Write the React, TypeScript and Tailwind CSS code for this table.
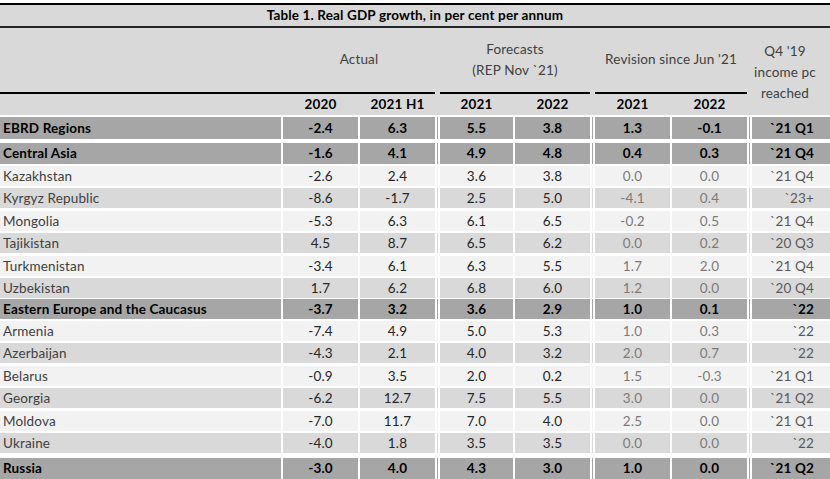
type Kind = 'region' | 'light' | 'dark';

interface Row {
  name: string;
  values: string[];
  kind: Kind;
  h: string;
  mt: string;
}

const rows: Row[] = [
  { name: 'EBRD Regions', values: ['-2.4', '6.3', '5.5', '3.8', '1.3', '-0.1', '`21 Q1'], kind: 'region', h: 'h-[22px]', mt: 'mt-[2px]' },
  { name: 'Central Asia', values: ['-1.6', '4.1', '4.9', '4.8', '0.4', '0.3', '`21 Q4'], kind: 'region', h: 'h-[21px]', mt: 'mt-[4px]' },
  { name: 'Kazakhstan', values: ['-2.6', '2.4', '3.6', '3.8', '0.0', '0.0', '`21 Q4'], kind: 'light', h: 'h-[20px]', mt: 'mt-[2px]' },
  { name: 'Kyrgyz Republic', values: ['-8.6', '-1.7', '2.5', '5.0', '-4.1', '0.4', '`23+'], kind: 'dark', h: 'h-[20px]', mt: 'mt-[2px]' },
  { name: 'Mongolia', values: ['-5.3', '6.3', '6.1', '6.5', '-0.2', '0.5', '`21 Q4'], kind: 'light', h: 'h-[20px]', mt: 'mt-[3px]' },
  { name: 'Tajikistan', values: ['4.5', '8.7', '6.5', '6.2', '0.0', '0.2', '`20 Q3'], kind: 'dark', h: 'h-[20px]', mt: 'mt-[2px]' },
  { name: 'Turkmenistan', values: ['-3.4', '6.1', '6.3', '5.5', '1.7', '2.0', '`21 Q4'], kind: 'light', h: 'h-[20px]', mt: 'mt-[3px]' },
  { name: 'Uzbekistan', values: ['1.7', '6.2', '6.8', '6.0', '1.2', '0.0', '`20 Q4'], kind: 'dark', h: 'h-[20px]', mt: 'mt-[2px]' },
  { name: 'Eastern Europe and the Caucasus', values: ['-3.7', '3.2', '3.6', '2.9', '1.0', '0.1', '`22'], kind: 'region', h: 'h-[20px]', mt: 'mt-[1px]' },
  { name: 'Armenia', values: ['-7.4', '4.9', '5.0', '5.3', '1.0', '0.3', '`22'], kind: 'light', h: 'h-[20px]', mt: 'mt-[2px]' },
  { name: 'Azerbaijan', values: ['-4.3', '2.1', '4.0', '3.2', '2.0', '0.7', '`22'], kind: 'dark', h: 'h-[20px]', mt: 'mt-[2px]' },
  { name: 'Belarus', values: ['-0.9', '3.5', '2.0', '0.2', '1.5', '-0.3', '`21 Q1'], kind: 'light', h: 'h-[20px]', mt: 'mt-[3px]' },
  { name: 'Georgia', values: ['-6.2', '12.7', '7.5', '5.5', '3.0', '0.0', '`21 Q2'], kind: 'dark', h: 'h-[20px]', mt: 'mt-[2px]' },
  { name: 'Moldova', values: ['-7.0', '11.7', '7.0', '4.0', '2.5', '0.0', '`21 Q1'], kind: 'light', h: 'h-[20px]', mt: 'mt-[3px]' },
  { name: 'Ukraine', values: ['-4.0', '1.8', '3.5', '3.5', '0.0', '0.0', '`22'], kind: 'dark', h: 'h-[20px]', mt: 'mt-[2px]' },
  { name: 'Russia', values: ['-3.0', '4.0', '4.3', '3.0', '1.0', '0.0', '`21 Q2'], kind: 'region', h: 'h-[21px]', mt: 'mt-[5px]' },
];

const fills: Record<Kind, string> = {
  region: 'bg-[#a6a6a6]',
  light: 'bg-[#f2f2f2]',
  dark: 'bg-[#d9d9d9]',
};

function Sep() {
  return <div className="w-[2px] bg-white" />;
}

function DoubleSep() {
  return <div className="w-[5px] border-x-2 border-white" />;
}

function DataRow({ row }: { row: Row }) {
  const bold = row.kind === 'region';
  const [a, b, c, d, e, f, q] = row.values;
  const main = bold ? 'text-black' : 'text-[#262626]';
  const rev = bold ? 'text-black' : 'text-[#7a7a7a]';
  const q4 = bold ? 'text-black' : 'text-[#595959]';

  return (
    <div className={`flex ${fills[row.kind]} ${row.h} ${row.mt} ${bold ? 'font-bold' : ''}`}>
      <div className={`w-[281px] pl-[3px] pt-[1px] flex items-center ${bold ? 'text-black' : 'text-[#404040]'}`}>{row.name}</div>
      <Sep />
      <div className={`w-[75px] pt-[1px] flex items-center justify-center ${main}`}>{a}</div>
      <Sep />
      <div className={`w-[75px] pt-[1px] flex items-center justify-center ${main}`}>{b}</div>
      <DoubleSep />
      <div className={`w-[73px] pt-[1px] flex items-center justify-center ${main}`}>{c}</div>
      <Sep />
      <div className={`w-[75px] pt-[1px] flex items-center justify-center ${main}`}>{d}</div>
      <DoubleSep />
      <div className={`w-[75px] pt-[1px] flex items-center justify-center ${rev}`}>{e}</div>
      <Sep />
      <div className={`w-[75px] pt-[1px] flex items-center justify-center ${rev}`}>{f}</div>
      <DoubleSep />
      <div className={`w-[78px] pt-[1px] flex items-center justify-end pr-[16px] ${q4}`}>{q}</div>
    </div>
  );
}

export default function App() {
  return (
    <div className="w-[830px] h-[479px] overflow-hidden bg-white pt-[3px] font-['Lato',sans-serif] text-[13.5px] tracking-[0.15px] leading-none">
      {/* Title */}
      <div className="h-[25px] border-y-2 border-t-black border-b-[#262626] bg-[#d9d9d9] flex items-center justify-center font-bold text-black">
        Table 1. Real GDP growth, in per cent per annum
      </div>

      {/* Column headings */}
      <div className="grid grid-cols-[281px_2px_75px_2px_75px_5px_73px_2px_75px_5px_75px_2px_75px_5px_78px] grid-rows-[64px_2px_21px] bg-[#d9d9d9] text-[#404040]">
        <div className="col-start-3 col-end-6 row-start-1 flex items-center justify-center">Actual</div>
        <div className="col-start-7 col-end-10 row-start-1 flex flex-col items-center justify-center leading-[21px]">
          <span>Forecasts</span>
          <span>(REP Nov `21)</span>
        </div>
        <div className="col-start-11 col-end-14 row-start-1 flex items-center justify-center">Revision since Jun '21</div>
        <div className="col-start-15 col-end-16 row-start-1 row-end-4 flex flex-col items-center justify-center pr-[12px] pt-[2px] leading-[21px]">
          <span>Q4 '19</span>
          <span>income pc</span>
          <span>reached</span>
        </div>

        <div className="col-start-1 col-end-6 row-start-2 bg-black" />
        <div className="col-start-7 col-end-10 row-start-2 bg-black" />
        <div className="col-start-11 col-end-14 row-start-2 bg-black" />

        {[
          ['col-start-3', '2020'],
          ['col-start-5', '2021 H1'],
          ['col-start-7', '2021'],
          ['col-start-9', '2022'],
          ['col-start-11', '2021'],
          ['col-start-13', '2022'],
        ].map(([col, label], i) => (
          <div key={i} className={`${col} row-start-3 flex items-center justify-center font-bold text-black`}>
            {label}
          </div>
        ))}
      </div>

      {/* Data rows */}
      <div className="flex flex-col">
        {rows.map((row) => (
          <DataRow key={row.name} row={row} />
        ))}
      </div>
    </div>
  );
}
